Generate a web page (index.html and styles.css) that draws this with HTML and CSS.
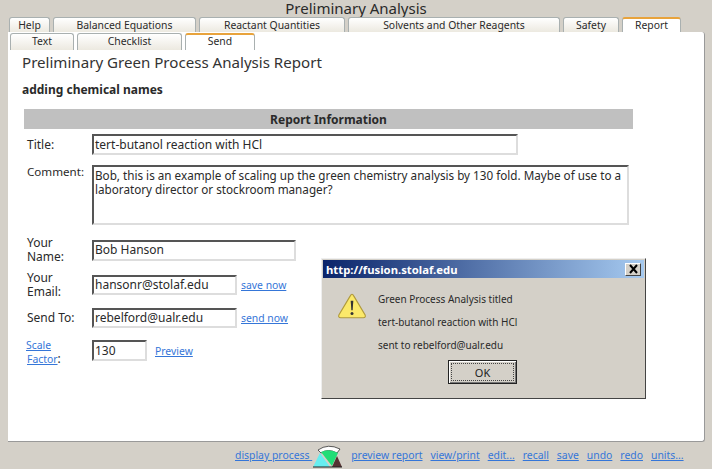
FILE: index.html
```html
<!DOCTYPE html>
<html>
<head>
  <title>Preliminary Analysis</title>
  <link rel="stylesheet" href="styles.css">
</head>
<body>
<h1 class="app-title">Preliminary Analysis</h1>

<div class="tabs tabs-top">
  <div class="tab t-help">Help</div>
  <div class="tab t-balanced">Balanced Equations</div>
  <div class="tab t-reactant">Reactant Quantities</div>
  <div class="tab t-solvents">Solvents and Other Reagents</div>
  <div class="tab t-safety">Safety</div>
  <div class="tab t-report selected">Report</div>
</div>

<div id="panel">
  <div class="tabs tabs-sub">
    <div class="tab t-text">Text</div>
    <div class="tab t-checklist">Checklist</div>
    <div class="tab t-send selected">Send</div>
  </div>

  <div class="report-title">Preliminary Green Process Analysis Report</div>
  <div class="report-sub">adding chemical names</div>
  <div class="info-bar">Report Information</div>

  <div class="row row-title">
    <div class="label">Title:</div>
    <div class="field f-title">tert-butanol reaction with HCl</div>
  </div>
  <div class="row row-comment">
    <div class="label">Comment:</div>
    <div class="field f-comment">Bob, this is an example of scaling up the green chemistry analysis by 130 fold. Maybe of use to a laboratory director or stockroom manager?</div>
  </div>
  <div class="row row-name">
    <div class="label label-wrap">Your Name:</div>
    <div class="field f-name">Bob Hanson</div>
  </div>
  <div class="row row-email">
    <div class="label label-wrap">Your Email:</div>
    <div class="field f-short">hansonr@stolaf.edu</div>
    <a href="#" class="inline-link">save now</a>
  </div>
  <div class="row row-send">
    <div class="label">Send To:</div>
    <div class="field f-short">rebelford@ualr.edu</div>
    <a href="#" class="inline-link">send now</a>
  </div>
  <div class="row row-scale">
    <div class="label label-wrap"><a href="#" class="scale-link">Scale Factor</a>:</div>
    <div class="field f-scale">130</div>
    <a href="#" class="inline-link link-preview">Preview</a>
  </div>
</div>

<div class="footer-links">
  <a href="#">display process&nbsp;</a>
  <svg class="gauge" width="31" height="23" viewBox="0 0 31 23">
    <path d="M6 5 Q16 -2 28 4 L25 8 Q16 3 9 8 Z" fill="#fff" stroke="#333" stroke-width="0.8"/>
    <path d="M1 22 L8 8 L18 22 Z" fill="#66eef0"/>
    <path d="M9 7 Q17 3 26 8 L20 21 Z" fill="#22dd77"/>
    <path d="M20 22 L25 11 L30 22 Z" fill="#553333"/>
    <path d="M1 22 L30 22" stroke="#222" stroke-width="1"/>
  </svg>
  <a href="#">preview report</a>
  <a href="#">view/print</a>
  <a href="#">edit...</a>
  <a href="#">recall</a>
  <a href="#">save</a>
  <a href="#">undo</a>
  <a href="#">redo</a>
  <a href="#">units...</a>
</div>

<div id="dialog">
  <div class="dialog-bar">
    <span>http://fusion.stolaf.edu</span>
    <div class="dialog-close">
      <svg width="11" height="10" viewBox="0 0 11 10"><path d="M2 1 L9 9 M9 1 L2 9" stroke="#000" stroke-width="2"/></svg>
    </div>
  </div>
  <div class="dialog-body">
    <svg class="warn" width="30" height="28" viewBox="0 0 32 29">
      <path d="M16 2 Q17 2 18 4 L30 24 Q31 27 28 27 L4 27 Q1 27 2 24 L14 4 Q15 2 16 2 Z" fill="#fbe96a" stroke="#b09a3c" stroke-width="1.2"/>
      <path d="M14.6 9 L17.4 9 L16.7 19 L15.3 19 Z" fill="#333"/>
      <circle cx="16" cy="22.5" r="1.6" fill="#333"/>
    </svg>
    <div class="dialog-msg">
      <p>Green Process Analysis titled</p>
      <p>tert-butanol reaction with HCl</p>
      <p>sent to rebelford@ualr.edu</p>
    </div>
  </div>
  <div class="dialog-btns"><button class="ok">OK</button></div>
</div>
</body>
</html>
```

FILE: styles.css
```css
body{
  margin: 0;
  background: #d4d0c8;
  font-family: "Noto Sans", "Open Sans", sans-serif;
  font-size: 12px;
  color: #2a2a2a;
  height: 469px;
  overflow: hidden;
  position: relative;
}

a{
  color: #3576d8;
  text-decoration: underline;
}

.app-title{
  margin: 0;
  height: 17px;
  line-height: 16px;
  text-align: center;
  font-size: 15px;
  font-weight: normal;
}

.tabs{
  display: flex;
}

.tabs-top{
  height: 15px;
  padding-left: 9px;
  gap: 3px;
}

.tabs-sub{
  height: 17px;
  padding: 1px 0 0 2px;
  gap: 3px;
}

.tab{
  box-sizing: border-box;
  border: 1px solid #a9b0b0;
  border-bottom: none;
  border-radius: 3px 3px 0 0;
  background: linear-gradient(#fff, #ece9e0);
  text-align: center;
  line-height: 14px;
  font-size: 10.4px;
}

.tab.selected{
  background: #fff;
  border-top: 2px solid #e8a33c;
  line-height: 13px;
}

.t-help{ width: 41px; }
.t-balanced{ width: 143px; }
.t-reactant{ width: 146px; }
.t-solvents{ width: 212px; }
.t-safety{ width: 56px; }
.t-report{ width: 59px; }
.t-text{ width: 64px; }
.t-checklist{ width: 105px; }
.t-send{ width: 70px; }

#panel{
  box-sizing: border-box;
  width: 697px;
  height: 410px;
  margin-left: 8px;
  background: #fff;
  border-right: 1px solid #999;
  border-bottom: 1px solid #999;
  border-radius: 0 3px 3px 0;
}

.report-title{
  margin: 1px 0 0 14px;
  height: 22px;
  line-height: 22px;
  font-size: 15.1px;
  color: #333;
}

.report-sub{
  margin: 7px 0 0 14px;
  height: 20px;
  line-height: 20px;
  font-weight: bold;
  font-size: 12px;
}

.info-bar{
  margin: 9px 0 0 16px;
  width: 609px;
  height: 20px;
  line-height: 21px;
  background: #c0c0c0;
  text-align: center;
  font-weight: bold;
  font-size: 12px;
}

.row{
  display: flex;
  align-items: center;
  padding-left: 19px;
}

.label{
  box-sizing: border-box;
  width: 65px;
  line-height: 14px;
  font-size: 12px;
}

.label-wrap{
  padding-right: 25px;
}

.scale-link{
  font-size: 10.4px;
  margin-left: -1px;
}

.field{
  box-sizing: border-box;
  border: 2px solid;
  border-color: #555 #ddd #ddd #555;
  padding: 0 1px;
  font-size: 12px;
  line-height: 17px;
}

.row-title{ margin-top: 5px; }
.row-comment{ margin-top: 10px; align-items: flex-start; }
.row-name{ margin-top: 11px; }
.row-email{ margin-top: 7px; }
.row-send{ margin-top: 9px; }
.row-scale{ margin-top: 7px; }

.row-comment .label{ font-size: 11.6px; }
.row-scale .label{ padding-top: 3px; }

.f-title{ width: 426px; height: 21px; line-height: 18px; }
.f-comment{ width: 537px; height: 60px; font-size: 11.7px; line-height: 14px; padding-top: 1px; }
.f-name{ width: 204px; height: 21px; line-height: 15px; }
.f-short{ width: 145px; height: 20px; line-height: 16px; }
.f-scale{ width: 55px; height: 21px; }

.inline-link{
  margin-left: 4px;
  font-size: 10.4px;
}

.link-preview{
  margin-left: 8px;
}

.footer-links{
  display: flex;
  align-items: flex-start;
  gap: 8px;
  padding: 3px 0 0 235px;
  font-size: 10.4px;
}

.footer-links a{
  line-height: 20px;
}

.gauge{
  margin-left: -8px;
}

/* alert box sits over the form */
#dialog{
  position: absolute;
  left: 321px;
  top: 258px;
  width: 325px;
  height: 141px;
  box-sizing: border-box;
  background: #d4d0c8;
  border: 1px solid;
  border-color: #eee #444 #444 #eee;
  padding: 1px;
}

.dialog-bar{
  display: flex;
  justify-content: space-between;
  align-items: center;
  height: 18px;
  padding: 0 3px;
  background: linear-gradient(to right, #0a246a, #a6caf0);
  color: #fff;
  font-weight: bold;
  font-size: 11.3px;
}

.dialog-close{
  width: 16px;
  height: 13px;
  box-sizing: border-box;
  background: #d4d0c8;
  border: 1px solid;
  border-color: #fff #444 #444 #fff;
  display: flex;
  align-items: center;
  justify-content: center;
}

.dialog-body{
  display: flex;
  padding: 14px 0 0 14px;
}

.warn{
  margin-right: 11px;
}

.dialog-msg p{
  margin: 0;
  height: 23px;
  line-height: 14px;
  font-size: 10px;
}

.dialog-btns{
  text-align: center;
  margin-top: -1px;
}

.ok{
  width: 69px;
  height: 24px;
  margin-left: -2px;
  background: #d4d0c8;
  border: 1px solid #222;
  outline: 1px dotted #444;
  outline-offset: -4px;
  box-shadow: inset 1px 1px 0 #fff, inset -1px -1px 0 #777;
  font-family: inherit;
  font-size: 11px;
  color: #222;
}
```
